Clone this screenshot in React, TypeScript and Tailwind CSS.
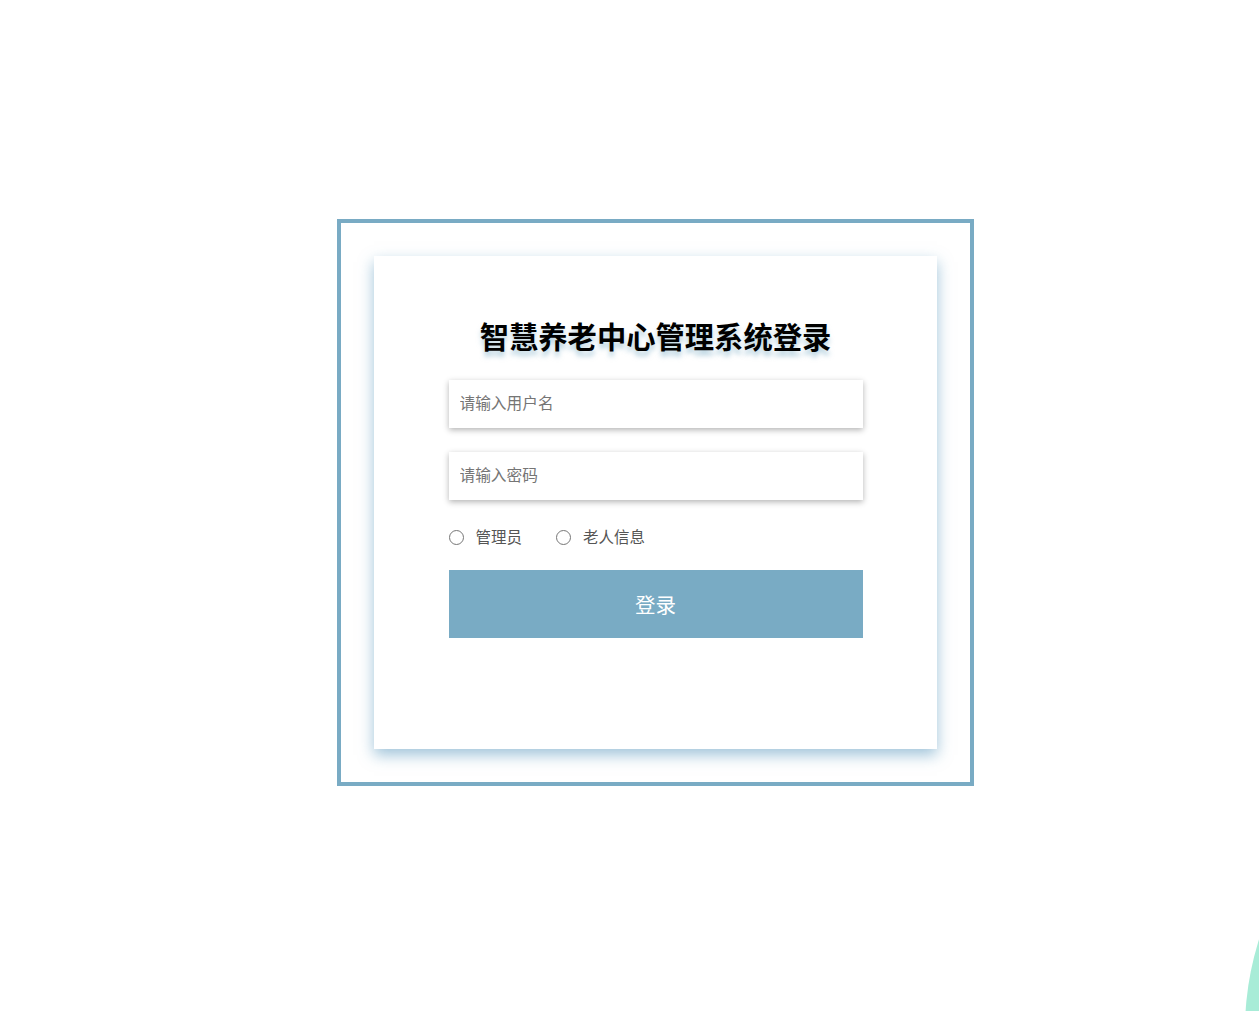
import { useState } from "react";

const FONT = "font-['Microsoft_YaHei','Noto_Sans_CJK_SC',sans-serif]";

export default function App() {
  const [role, setRole] = useState<"admin" | "elder" | null>(null);

  return (
    <div
      className={`relative h-screen w-full overflow-hidden bg-white ${FONT} flex items-center justify-center pl-[52px] pb-[6px]`}
    >
      {/* outer frame */}
      <div className="w-[637px] h-[567px] border-4 border-[#79abc4] flex items-center justify-center">
        {/* card */}
        <div className="w-[563px] h-[493px] bg-white shadow-[0_6px_14px_rgba(80,145,185,0.55)] flex flex-col items-center pt-[59px]">
          <h1 className="text-[29.3px] leading-[40px] font-bold text-black [text-shadow:0_5px_5px_rgba(121,171,196,0.55)]">
            智慧养老中心管理系统登录
          </h1>

          <div className="w-[414px] mt-[25px] flex flex-col">
            <input
              type="text"
              placeholder="请输入用户名"
              className="h-[48px] w-full px-[11px] pb-[3px] text-[15.7px] text-[#333] placeholder:text-[#757575] bg-white outline-none shadow-[0_2px_6px_rgba(0,0,0,0.3)]"
            />
            <input
              type="password"
              placeholder="请输入密码"
              className="h-[48px] w-full mt-[24px] px-[11px] pb-[3px] text-[15.7px] text-[#333] placeholder:text-[#757575] bg-white outline-none shadow-[0_2px_6px_rgba(0,0,0,0.3)]"
            />

            {/* role select */}
            <div className="flex items-center mt-[29px] h-[16px] text-[15.5px] text-[#555]">
              <RadioItem
                label="管理员"
                checked={role === "admin"}
                onClick={() => setRole("admin")}
              />
              <div className="w-[34px]" />
              <RadioItem
                label="老人信息"
                checked={role === "elder"}
                onClick={() => setRole("elder")}
              />
            </div>

            <button className="mt-[25px] h-[68px] w-full bg-[#79abc4] text-white text-[20.5px]">
              登录
            </button>
          </div>
        </div>
      </div>

      {/* decoration bottom right */}
      <div className="absolute left-[1245px] top-[730px] w-[600px] h-[600px] rounded-full bg-[#a8ecd7]" />
    </div>
  );
}

interface RadioItemProps {
  label: string;
  checked: boolean;
  onClick: () => void;
}

function RadioItem({ label, checked, onClick }: RadioItemProps) {
  return (
    <label className="flex items-center cursor-pointer" onClick={onClick}>
      <span className="w-[15px] h-[15px] rounded-full border border-[#767676] flex items-center justify-center">
        {checked && <span className="w-[7px] h-[7px] rounded-full bg-[#79abc4]" />}
      </span>
      <span className="ml-[12px]">{label}</span>
    </label>
  );
}
